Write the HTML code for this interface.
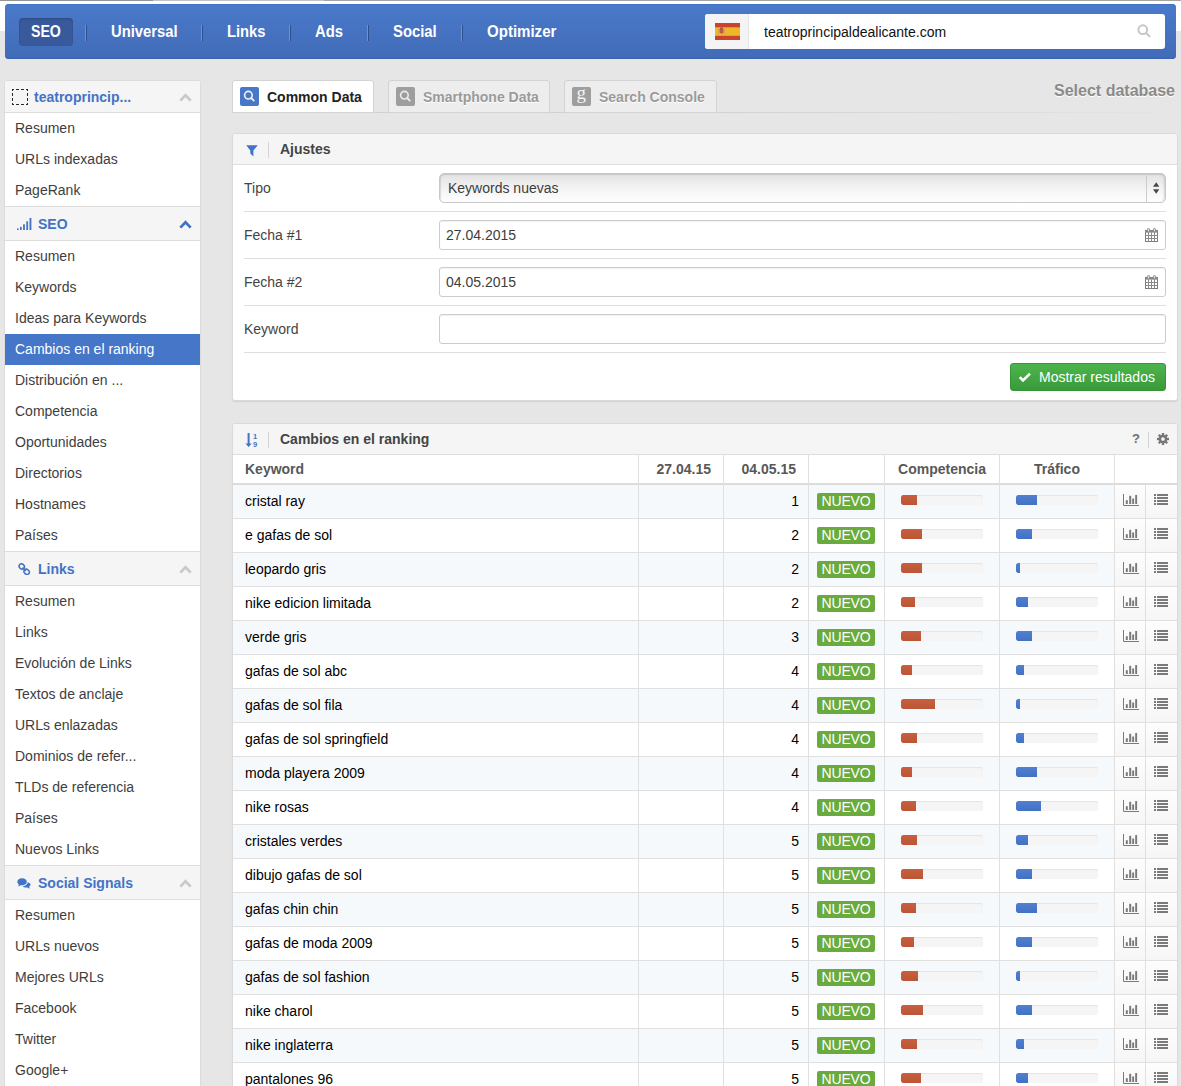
<!DOCTYPE html>
<html lang="es">
<head>
<meta charset="utf-8">
<title>Cambios en el ranking</title>
<style>
*{box-sizing:border-box;margin:0;padding:0}
html,body{width:1181px;height:1086px;overflow:hidden}
body{background:#e6e6e6;font-family:"Liberation Sans",Arial,Helvetica,sans-serif;font-size:14px;color:#333;position:relative}
.abs{position:absolute}
#topwhite{left:0;top:0;width:1181px;height:31px;background:#fff}
#topline{left:0;top:0;width:1181px;height:1px;background:linear-gradient(90deg,#c4c4c4 324px,#a4a4a4 324px)}
#topline2{left:0;top:0;width:153px;height:1px;background:#949494}
#nav{left:5px;top:4px;width:1171px;height:55px;border-radius:4px;background:linear-gradient(#4a7acb,#416bb7);box-shadow:inset 0 -1px 0 #3b64b2,inset 0 1px 0 #4272c6}
#nav .it{position:absolute;top:14px;height:28px;line-height:28px;color:#fff;font-weight:bold;font-size:16px;white-space:nowrap;transform-origin:0 50%}
#nav .act{background:#38599b;border-radius:4px;text-align:center;box-shadow:inset 0 1px 2px rgba(0,0,0,.18)}
#nav .sep{position:absolute;top:21px;width:2px;height:16px;border-left:1px solid #6293ec;border-right:1px solid #2f4e8c}
#search{left:700px;top:10px;width:460px;height:35px;background:#fff;border-radius:3px;overflow:hidden}
#search .flagbox{position:absolute;left:0;top:0;width:44px;height:35px;background:#f4f4f4;border-right:1px solid #e4e4e4}
#search .txt{position:absolute;left:59px;top:1px;line-height:35px;font-size:14px;color:#111}

#side{left:4px;top:80px;width:197px;height:1010px;background:#fff;border:1px solid #dcdcdc;border-radius:3px 3px 0 0;overflow:hidden}
#side .h{height:35px;background:#f5f5f5;border-top:1px solid #ddd;border-bottom:1px solid #ddd;position:relative;font-weight:bold;color:#4373c6;font-size:14px;line-height:35px}
#side .h.first{border-top:none;height:32px;line-height:33px}
#side .h .t{position:absolute;left:33px;top:0}
#side .h svg.ic{position:absolute}
#side .h svg.ch{position:absolute;left:173.5px;top:12.5px}
#side .h.first svg.ch{top:12px}
#side .i{height:31px;line-height:31px;padding-left:10px;color:#3e3e3e;white-space:nowrap}
#side .i.on{background:#4676c8;color:#fff}
#tabline{left:232px;top:112px;width:945px;height:1px;background:linear-gradient(90deg,#d0d0d0 0,#d1d1d1 50%,#dedede 85%,#e5e5e5 100%)}
.tab{top:80px;height:33px;border:1px solid #d3d3d3;border-bottom:1px solid #d3d3d3;border-radius:3px 3px 0 0;background:#ededed;font-weight:bold;color:#9a9a9a;text-shadow:0 1px 0 #fff}
.tab.on{background:#fff;color:#222;text-shadow:none}
.tab .tt{position:absolute;top:0;line-height:32px;white-space:nowrap}
#seldb{left:1001px;top:80.5px;width:174px;text-align:right;font-weight:bold;font-size:16px;color:#8a8a8a;text-shadow:0 1px 0 #fff;line-height:20px}
.panel{background:#fff;border:1px solid #dadada;border-radius:3px;overflow:hidden;box-shadow:0 1px 1px rgba(0,0,0,.09)}
.ph{position:relative;height:31px;box-sizing:border-box;background:#f5f5f5;border-bottom:1px solid #dedede;font-weight:bold;color:#444}
.ph .pt{position:absolute;left:47px;top:1px;line-height:29px}
.psep{position:absolute;left:35px;top:8px;width:1px;height:16px;background:#d4d4d4}
.q{left:899px;top:1px;line-height:28px;font-size:13px;font-weight:bold;color:#6e6e6e}
.fl{position:absolute;left:11px;width:922px;height:47px;border-bottom:1px solid #dedede;color:#444}
.fl span{position:absolute;left:0;top:0;line-height:46px}
.inp{border:1px solid #ccc;border-radius:3px;background:#fff;box-shadow:inset 0 1px 1px rgba(0,0,0,.06)}
.inp span,.sel span{position:absolute;left:6px;top:0;line-height:28px;color:#3d3d3d}
.sel{border:1px solid #c8c8c8;border-radius:5px;background:linear-gradient(#e2e2e2,#f4f4f4 55%,#fefefe);box-shadow:inset 1px 1px 1px rgba(0,0,0,.12),inset -2px 0 2px -1px rgba(0,0,0,.15)}
.sel span{left:8px}
.selarr{position:absolute;right:0;top:0;width:19px;height:28px;border-left:1px solid #ccc}
.selarr svg{position:absolute;left:6px;top:8px}
.btn{border-radius:3px;background:linear-gradient(#4db54d,#399a39);border:1px solid #379537;color:#fff}
.btn span{position:absolute;left:28px;top:0;line-height:26px;white-space:nowrap}
table.t{border-collapse:separate;table-layout:fixed;width:944px}
.t th,.t td{border-right:1px solid #e0e0e0;border-bottom:1px solid #e0e0e0;height:34px;vertical-align:middle;white-space:nowrap;overflow:hidden}
.t th:last-child,.t td:last-child{border-right:none}
.t th{height:30px;border-bottom:2px solid #dcdcdc;font-weight:bold;color:#585858;text-align:left;background:#fff}
.t .k{padding-left:12px}
.t td.k,.t td.n{padding-bottom:2px}
.t td.k{color:#000}
.t th.d{text-align:right;padding-right:12px}
.t th.c{text-align:center}
.t td.n{text-align:right;padding-right:9px;color:#000}
.t tr.o td{background:#f6f9fc}
.t tr.e td{background:#fff}
.t td.g{background:linear-gradient(#fdfdfd,#f6f6f6) !important;text-align:center}
.t td.b{padding-left:8px}
.nv{display:inline-block;width:58px;height:17px;line-height:17px;background:#6aab3e;color:#fff;border-radius:2px;text-align:center;vertical-align:middle;letter-spacing:-0.2px}
.t td.p{padding-left:16px}
.tr{position:relative;top:-1.5px;width:82px;height:10px;border-radius:2px;background:#f5f5f5;box-shadow:inset 0 1px 1px rgba(0,0,0,.07);overflow:hidden}
.fr{height:10px;background:linear-gradient(#c8603f,#bb5536);border-radius:2px 0 0 2px}
.fb{height:10px;background:linear-gradient(#5080d2,#4371c2);border-radius:2px 0 0 2px}
.t td.g svg{display:block;margin:0 auto;position:relative}
.t svg.ci{top:-1.5px;left:0.5px}
.t svg.li{top:-2.5px;left:-1px}
</style>
</head>
<body>
<div class="abs" id="topwhite"></div>
<div class="abs" id="topline"></div>
<div class="abs" id="topline2"></div>

<div class="abs" id="nav">
  <div class="it act" style="left:14px;width:54px"><span style="display:inline-block;transform:scaleX(0.885)">SEO</span></div>
  <div class="sep" style="left:80px"></div>
  <div class="it" style="left:106px;transform:scaleX(0.924)">Universal</div>
  <div class="sep" style="left:196px"></div>
  <div class="it" style="left:222px;transform:scaleX(0.922)">Links</div>
  <div class="sep" style="left:284px"></div>
  <div class="it" style="left:310px;transform:scaleX(0.925)">Ads</div>
  <div class="sep" style="left:362px"></div>
  <div class="it" style="left:388px;transform:scaleX(0.928)">Social</div>
  <div class="sep" style="left:456px"></div>
  <div class="it" style="left:482px;transform:scaleX(0.94)">Optimizer</div>
  <div class="abs" id="search">
    <div class="flagbox">
      <svg class="abs" style="left:10px;top:9px" width="25" height="17" viewBox="0 0 25 17">
        <rect width="25" height="17" fill="#c9432e"/>
        <rect y="4.3" width="25" height="8.5" fill="#eeb72a"/>
        <rect x="3" y="6.2" width="1.3" height="5" fill="#d9a05a"/><rect x="8.7" y="6.2" width="1.3" height="5" fill="#d9a05a"/><path d="M4.6 5.6H8.4V9.6Q6.5 11.8 4.6 9.6Z" fill="#c4573a"/><rect x="5" y="4.6" width="3" height="1.2" fill="#b5452f"/><rect x="5.6" y="7" width="1.8" height="2" fill="#8a6a8a"/>
      </svg>
    </div>
    <div class="txt">teatroprincipaldealicante.com</div>
    <svg class="abs" style="left:431px;top:8.5px" width="16" height="16" viewBox="0 0 16 16" fill="none" stroke="#c6c6c6" stroke-width="2">
      <circle cx="6.8" cy="6.7" r="4.4"/><path d="M10.2 10.1 L13.4 13.2" stroke-linecap="round"/>
    </svg>
  </div>
</div>

<div class="abs" id="side">
  <div class="h first"><svg class="abs" style="left:7px;top:8px" width="16" height="16" viewBox="0 0 16 16" fill="none" stroke="#2a2a2a" stroke-width="1" stroke-dasharray="2 2 3 2 3 2 2 0"><path d="M0 0.5H16"/><path d="M0 15.5H16"/><path d="M0.5 0V16"/><path d="M15.5 0V16"/></svg><span class="t" style="left:29px">teatroprincip...</span><svg class="ch" width="13" height="9" viewBox="0 0 13 9"><path d="M1.3 7.6L6.5 2.2L11.7 7.6" fill="none" stroke="#c9c9c9" stroke-width="2.7"/></svg></div>
  <div class="i">Resumen</div>
  <div class="i">URLs indexadas</div>
  <div class="i">PageRank</div>
  <div class="h"><svg class="ic" style="left:12px;top:11px" width="15" height="12" viewBox="0 0 15 13" preserveAspectRatio="none" fill="#4373c6"><rect x="0" y="11.3" width="1.6" height="1.7"/><rect x="3" y="9.6" width="1.7" height="3.4"/><rect x="6.1" y="6.8" width="1.8" height="6.2"/><rect x="9.3" y="3.6" width="1.8" height="9.4"/><rect x="12.5" y="0" width="1.9" height="13"/></svg><span class="t">SEO</span><svg class="ch" width="13" height="9" viewBox="0 0 13 9"><path d="M1.3 7.6L6.5 2.2L11.7 7.6" fill="none" stroke="#4373c6" stroke-width="2.7"/></svg></div>
  <div class="i">Resumen</div>
  <div class="i">Keywords</div>
  <div class="i">Ideas para Keywords</div>
  <div class="i on">Cambios en el ranking</div>
  <div class="i">Distribución en ...</div>
  <div class="i">Competencia</div>
  <div class="i">Oportunidades</div>
  <div class="i">Directorios</div>
  <div class="i">Hostnames</div>
  <div class="i">Países</div>
  <div class="h"><svg class="ic" style="left:13px;top:10.5px" width="12.5" height="12.5" viewBox="0 0 13 13" fill="none" stroke="#4373c6" stroke-width="1.6"><ellipse cx="3.9" cy="3.6" rx="2.9" ry="2.5" transform="rotate(40 3.9 3.6)"/><ellipse cx="9" cy="9.2" rx="2.9" ry="2.5" transform="rotate(40 9 9.2)"/><path d="M4.8 4.6L8.1 8.2"/></svg><span class="t">Links</span><svg class="ch" width="13" height="9" viewBox="0 0 13 9"><path d="M1.3 7.6L6.5 2.2L11.7 7.6" fill="none" stroke="#c9c9c9" stroke-width="2.7"/></svg></div>
  <div class="i">Resumen</div>
  <div class="i">Links</div>
  <div class="i">Evolución de Links</div>
  <div class="i">Textos de anclaje</div>
  <div class="i">URLs enlazadas</div>
  <div class="i">Dominios de refer...</div>
  <div class="i">TLDs de referencia</div>
  <div class="i">Países</div>
  <div class="i">Nuevos Links</div>
  <div class="h"><svg class="ic" style="left:12px;top:11.5px" width="14" height="11" viewBox="0 0 15 12" fill="#4373c6"><path d="M5.4 0.2C2.5 0.2 0.2 1.9 0.2 4.1C0.2 5.3 0.9 6.3 2 7.1C1.8 7.9 1.3 8.6 0.7 9.1C2 9 3.1 8.5 3.9 7.9C4.4 8 4.9 8 5.4 8C8.3 8 10.6 6.3 10.6 4.1C10.6 1.9 8.3 0.2 5.4 0.2Z"/><path d="M11.6 4.6C11.4 7 8.9 8.9 5.9 9C6.9 9.9 8.3 10.4 9.9 10.4C10.3 10.4 10.7 10.4 11.1 10.3C11.9 10.9 12.9 11.4 14.1 11.5C13.6 11 13.2 10.3 13 9.6C14 8.9 14.6 8 14.6 7C14.6 6 13.5 5.1 11.6 4.6Z"/></svg><span class="t">Social Signals</span><svg class="ch" width="13" height="9" viewBox="0 0 13 9"><path d="M1.3 7.6L6.5 2.2L11.7 7.6" fill="none" stroke="#c9c9c9" stroke-width="2.7"/></svg></div>
  <div class="i">Resumen</div>
  <div class="i">URLs nuevos</div>
  <div class="i">Mejores URLs</div>
  <div class="i">Facebook</div>
  <div class="i">Twitter</div>
  <div class="i">Google+</div>
</div>

<div class="abs" id="tabline"></div>
<div class="abs tab on" style="left:232px;width:142px">
  <svg class="abs" style="left:7px;top:6px" width="19" height="19" viewBox="0 0 19 19"><rect width="19" height="19" rx="2" fill="#4777c9"/><circle cx="8.4" cy="8.2" r="3.8" fill="none" stroke="#f2f2f2" stroke-width="1.6"/><path d="M11.2 11L13.8 13.6" stroke="#f2f2f2" stroke-width="1.8" stroke-linecap="round"/></svg>
  <span class="tt" style="left:34px">Common Data</span>
</div>
<div class="abs tab" style="left:388px;width:162px">
  <svg class="abs" style="left:7px;top:6px" width="19" height="19" viewBox="0 0 19 19"><rect width="19" height="19" rx="2" fill="#9e9e9e"/><circle cx="8.4" cy="8.2" r="3.8" fill="none" stroke="#ececec" stroke-width="1.6"/><path d="M11.2 11L13.8 13.6" stroke="#ececec" stroke-width="1.8" stroke-linecap="round"/></svg>
  <span class="tt" style="left:34px">Smartphone Data</span>
</div>
<div class="abs tab" style="left:564px;width:153px">
  <svg class="abs" style="left:7px;top:6px" width="19" height="19" viewBox="0 0 19 19"><rect width="19" height="19" rx="2" fill="#9e9e9e"/><text x="9.3" y="11.7" text-anchor="middle" font-family="Liberation Serif, serif" font-size="19" font-weight="normal" style="text-shadow:none" fill="#f4f4f4">g</text></svg>
  <span class="tt" style="left:34px">Search Console</span>
</div>
<div class="abs" id="seldb">Select database</div>

<div class="abs panel" id="p1" style="left:232px;top:133px;width:946px;height:268px">
  <div class="ph">
    <svg class="abs" style="left:13px;top:11px" width="12" height="12" viewBox="0 0 12 12"><path d="M0.2 0.2H11.8L7.4 5.4V11.6L4.3 8.6V5.4Z" fill="#4373c6"/></svg>
    <div class="psep"></div>
    <span class="pt">Ajustes</span>
  </div>
  <div class="fl" style="top:31px"><span>Tipo</span></div>
  <div class="fl" style="top:78px"><span>Fecha #1</span></div>
  <div class="fl" style="top:125px"><span>Fecha #2</span></div>
  <div class="fl" style="top:172px"><span>Keyword</span></div>
  <div class="abs sel" style="left:206px;top:39px;width:727px;height:30px"><span>Keywords nuevas</span>
    <div class="selarr"><svg width="6.4" height="12" viewBox="0 0 7 12" preserveAspectRatio="none" fill="#484848"><path d="M3.5 0.2L7 4.8H0Z"/><path d="M3.5 11.8L7 7.2H0Z"/></svg></div>
  </div>
  <div class="abs inp" style="left:206px;top:86px;width:727px;height:30px"><span>27.04.2015</span><svg class="abs cal" style="right:7px;top:7px" width="13" height="14" viewBox="0 0 13 14"><rect x="0.5" y="2.5" width="12" height="11" fill="#fff" stroke="#7c7c7c"/><rect x="0" y="2" width="13" height="2.6" fill="#858585"/><path d="M0.5 7.5H12.5M0.5 10.5H12.5M3.5 4.5V13.5M6.5 4.5V13.5M9.5 4.5V13.5" stroke="#8a8a8a" stroke-width="1" fill="none"/><rect x="2.4" y="0.4" width="2.2" height="3.6" rx="1.1" fill="#ddd" stroke="#7c7c7c" stroke-width="0.8"/><rect x="8.4" y="0.4" width="2.2" height="3.6" rx="1.1" fill="#ddd" stroke="#7c7c7c" stroke-width="0.8"/></svg></div>
  <div class="abs inp" style="left:206px;top:133px;width:727px;height:30px"><span>04.05.2015</span><svg class="abs cal" style="right:7px;top:7px" width="13" height="14" viewBox="0 0 13 14"><rect x="0.5" y="2.5" width="12" height="11" fill="#fff" stroke="#7c7c7c"/><rect x="0" y="2" width="13" height="2.6" fill="#858585"/><path d="M0.5 7.5H12.5M0.5 10.5H12.5M3.5 4.5V13.5M6.5 4.5V13.5M9.5 4.5V13.5" stroke="#8a8a8a" stroke-width="1" fill="none"/><rect x="2.4" y="0.4" width="2.2" height="3.6" rx="1.1" fill="#ddd" stroke="#7c7c7c" stroke-width="0.8"/><rect x="8.4" y="0.4" width="2.2" height="3.6" rx="1.1" fill="#ddd" stroke="#7c7c7c" stroke-width="0.8"/></svg></div>
  <div class="abs inp" style="left:206px;top:180px;width:727px;height:30px"></div>
  <div class="abs btn" style="left:777px;top:229px;width:156px;height:28px">
    <svg class="abs" style="left:6.7px;top:7px" width="14" height="12" viewBox="0 0 14 12"><path d="M1.7 6.2L5 9.5L12 2.6" fill="none" stroke="#fff" stroke-width="2.6"/></svg>
    <span>Mostrar resultados</span>
  </div>
</div>

<div class="abs panel" id="p2" style="left:232px;top:423px;width:946px;height:700px">
  <div class="ph">
    <svg class="abs" style="left:12px;top:8px" width="14" height="16" viewBox="0 0 14 16"><path d="M3.6 1V12.5" stroke="#4373c6" stroke-width="2" fill="none"/><path d="M0.5 11.4H6.7L3.6 15Z" fill="#4373c6"/><text x="8" y="7" font-size="7.5" font-family="Liberation Sans, sans-serif" fill="#4373c6">1</text><text x="8" y="15" font-size="7.5" font-family="Liberation Sans, sans-serif" fill="#4373c6">9</text></svg>
    <div class="psep"></div>
    <span class="pt">Cambios en el ranking</span>
    <span class="abs q">?</span>
    <div class="psep" style="left:915px"></div>
    <svg class="abs" style="left:924px;top:9px" width="12" height="12" viewBox="0 0 13 13"><g fill="#777"><circle cx="6.5" cy="6.5" r="4.6"/><g id="teeth"><rect x="5.2" y="0" width="2.6" height="13"/><rect x="0" y="5.2" width="13" height="2.6"/><rect x="5.2" y="0" width="2.6" height="13" transform="rotate(45 6.5 6.5)"/><rect x="5.2" y="0" width="2.6" height="13" transform="rotate(-45 6.5 6.5)"/></g></g><circle cx="6.5" cy="6.5" r="2" fill="#f5f5f5"/></svg>
  </div>
  <table class="t" cellspacing="0" cellpadding="0">
    <colgroup><col style="width:406px"><col style="width:85px"><col style="width:85px"><col style="width:76px"><col style="width:115px"><col style="width:115px"><col style="width:31px"><col style="width:31px"></colgroup>
    <tr class="hd"><th class="k">Keyword</th><th class="d">27.04.15</th><th class="d">04.05.15</th><th></th><th class="c">Competencia</th><th class="c">Tráfico</th><th colspan="2"></th></tr>
<tr class="o"><td class="k">cristal ray</td><td></td><td class="n">1</td><td class="b"><span class="nv">NUEVO</span></td><td class="p"><div class="tr"><div class="fr" style="width:16px"></div></div></td><td class="p"><div class="tr"><div class="fb" style="width:21px"></div></div></td><td class="g"><svg class="ci" width="16" height="12" viewBox="0 0 16 12"><path d="M0.5 0V11.5H16" fill="none" stroke="#7a7a7a" stroke-width="1"/><rect x="2.8" y="6.2" width="2" height="3.8" fill="#7a7a7a"/><rect x="6.2" y="1.8" width="2" height="8.2" fill="#7a7a7a"/><rect x="9.2" y="4.5" width="1.9" height="5.5" fill="#7a7a7a"/><rect x="12.2" y="1" width="1.9" height="9" fill="#7a7a7a"/></svg></td><td class="g"><svg class="li" width="14" height="11" viewBox="0 0 14 11" fill="#7a7a7a"><rect x="0" y="0" width="2" height="2"/><rect x="3" y="0" width="11" height="2"/><rect x="0" y="3" width="2" height="2"/><rect x="3" y="3" width="11" height="2"/><rect x="0" y="6" width="2" height="2"/><rect x="3" y="6" width="11" height="2"/><rect x="0" y="9" width="2" height="2"/><rect x="3" y="9" width="11" height="2"/></svg></td></tr>
<tr class="e"><td class="k">e gafas de sol</td><td></td><td class="n">2</td><td class="b"><span class="nv">NUEVO</span></td><td class="p"><div class="tr"><div class="fr" style="width:21px"></div></div></td><td class="p"><div class="tr"><div class="fb" style="width:16px"></div></div></td><td class="g"><svg class="ci" width="16" height="12" viewBox="0 0 16 12"><path d="M0.5 0V11.5H16" fill="none" stroke="#7a7a7a" stroke-width="1"/><rect x="2.8" y="6.2" width="2" height="3.8" fill="#7a7a7a"/><rect x="6.2" y="1.8" width="2" height="8.2" fill="#7a7a7a"/><rect x="9.2" y="4.5" width="1.9" height="5.5" fill="#7a7a7a"/><rect x="12.2" y="1" width="1.9" height="9" fill="#7a7a7a"/></svg></td><td class="g"><svg class="li" width="14" height="11" viewBox="0 0 14 11" fill="#7a7a7a"><rect x="0" y="0" width="2" height="2"/><rect x="3" y="0" width="11" height="2"/><rect x="0" y="3" width="2" height="2"/><rect x="3" y="3" width="11" height="2"/><rect x="0" y="6" width="2" height="2"/><rect x="3" y="6" width="11" height="2"/><rect x="0" y="9" width="2" height="2"/><rect x="3" y="9" width="11" height="2"/></svg></td></tr>
<tr class="o"><td class="k">leopardo gris</td><td></td><td class="n">2</td><td class="b"><span class="nv">NUEVO</span></td><td class="p"><div class="tr"><div class="fr" style="width:21px"></div></div></td><td class="p"><div class="tr"><div class="fb" style="width:4px"></div></div></td><td class="g"><svg class="ci" width="16" height="12" viewBox="0 0 16 12"><path d="M0.5 0V11.5H16" fill="none" stroke="#7a7a7a" stroke-width="1"/><rect x="2.8" y="6.2" width="2" height="3.8" fill="#7a7a7a"/><rect x="6.2" y="1.8" width="2" height="8.2" fill="#7a7a7a"/><rect x="9.2" y="4.5" width="1.9" height="5.5" fill="#7a7a7a"/><rect x="12.2" y="1" width="1.9" height="9" fill="#7a7a7a"/></svg></td><td class="g"><svg class="li" width="14" height="11" viewBox="0 0 14 11" fill="#7a7a7a"><rect x="0" y="0" width="2" height="2"/><rect x="3" y="0" width="11" height="2"/><rect x="0" y="3" width="2" height="2"/><rect x="3" y="3" width="11" height="2"/><rect x="0" y="6" width="2" height="2"/><rect x="3" y="6" width="11" height="2"/><rect x="0" y="9" width="2" height="2"/><rect x="3" y="9" width="11" height="2"/></svg></td></tr>
<tr class="e"><td class="k">nike edicion limitada</td><td></td><td class="n">2</td><td class="b"><span class="nv">NUEVO</span></td><td class="p"><div class="tr"><div class="fr" style="width:14px"></div></div></td><td class="p"><div class="tr"><div class="fb" style="width:12px"></div></div></td><td class="g"><svg class="ci" width="16" height="12" viewBox="0 0 16 12"><path d="M0.5 0V11.5H16" fill="none" stroke="#7a7a7a" stroke-width="1"/><rect x="2.8" y="6.2" width="2" height="3.8" fill="#7a7a7a"/><rect x="6.2" y="1.8" width="2" height="8.2" fill="#7a7a7a"/><rect x="9.2" y="4.5" width="1.9" height="5.5" fill="#7a7a7a"/><rect x="12.2" y="1" width="1.9" height="9" fill="#7a7a7a"/></svg></td><td class="g"><svg class="li" width="14" height="11" viewBox="0 0 14 11" fill="#7a7a7a"><rect x="0" y="0" width="2" height="2"/><rect x="3" y="0" width="11" height="2"/><rect x="0" y="3" width="2" height="2"/><rect x="3" y="3" width="11" height="2"/><rect x="0" y="6" width="2" height="2"/><rect x="3" y="6" width="11" height="2"/><rect x="0" y="9" width="2" height="2"/><rect x="3" y="9" width="11" height="2"/></svg></td></tr>
<tr class="o"><td class="k">verde gris</td><td></td><td class="n">3</td><td class="b"><span class="nv">NUEVO</span></td><td class="p"><div class="tr"><div class="fr" style="width:20px"></div></div></td><td class="p"><div class="tr"><div class="fb" style="width:16px"></div></div></td><td class="g"><svg class="ci" width="16" height="12" viewBox="0 0 16 12"><path d="M0.5 0V11.5H16" fill="none" stroke="#7a7a7a" stroke-width="1"/><rect x="2.8" y="6.2" width="2" height="3.8" fill="#7a7a7a"/><rect x="6.2" y="1.8" width="2" height="8.2" fill="#7a7a7a"/><rect x="9.2" y="4.5" width="1.9" height="5.5" fill="#7a7a7a"/><rect x="12.2" y="1" width="1.9" height="9" fill="#7a7a7a"/></svg></td><td class="g"><svg class="li" width="14" height="11" viewBox="0 0 14 11" fill="#7a7a7a"><rect x="0" y="0" width="2" height="2"/><rect x="3" y="0" width="11" height="2"/><rect x="0" y="3" width="2" height="2"/><rect x="3" y="3" width="11" height="2"/><rect x="0" y="6" width="2" height="2"/><rect x="3" y="6" width="11" height="2"/><rect x="0" y="9" width="2" height="2"/><rect x="3" y="9" width="11" height="2"/></svg></td></tr>
<tr class="e"><td class="k">gafas de sol abc</td><td></td><td class="n">4</td><td class="b"><span class="nv">NUEVO</span></td><td class="p"><div class="tr"><div class="fr" style="width:11px"></div></div></td><td class="p"><div class="tr"><div class="fb" style="width:8px"></div></div></td><td class="g"><svg class="ci" width="16" height="12" viewBox="0 0 16 12"><path d="M0.5 0V11.5H16" fill="none" stroke="#7a7a7a" stroke-width="1"/><rect x="2.8" y="6.2" width="2" height="3.8" fill="#7a7a7a"/><rect x="6.2" y="1.8" width="2" height="8.2" fill="#7a7a7a"/><rect x="9.2" y="4.5" width="1.9" height="5.5" fill="#7a7a7a"/><rect x="12.2" y="1" width="1.9" height="9" fill="#7a7a7a"/></svg></td><td class="g"><svg class="li" width="14" height="11" viewBox="0 0 14 11" fill="#7a7a7a"><rect x="0" y="0" width="2" height="2"/><rect x="3" y="0" width="11" height="2"/><rect x="0" y="3" width="2" height="2"/><rect x="3" y="3" width="11" height="2"/><rect x="0" y="6" width="2" height="2"/><rect x="3" y="6" width="11" height="2"/><rect x="0" y="9" width="2" height="2"/><rect x="3" y="9" width="11" height="2"/></svg></td></tr>
<tr class="o"><td class="k">gafas de sol fila</td><td></td><td class="n">4</td><td class="b"><span class="nv">NUEVO</span></td><td class="p"><div class="tr"><div class="fr" style="width:34px"></div></div></td><td class="p"><div class="tr"><div class="fb" style="width:4px"></div></div></td><td class="g"><svg class="ci" width="16" height="12" viewBox="0 0 16 12"><path d="M0.5 0V11.5H16" fill="none" stroke="#7a7a7a" stroke-width="1"/><rect x="2.8" y="6.2" width="2" height="3.8" fill="#7a7a7a"/><rect x="6.2" y="1.8" width="2" height="8.2" fill="#7a7a7a"/><rect x="9.2" y="4.5" width="1.9" height="5.5" fill="#7a7a7a"/><rect x="12.2" y="1" width="1.9" height="9" fill="#7a7a7a"/></svg></td><td class="g"><svg class="li" width="14" height="11" viewBox="0 0 14 11" fill="#7a7a7a"><rect x="0" y="0" width="2" height="2"/><rect x="3" y="0" width="11" height="2"/><rect x="0" y="3" width="2" height="2"/><rect x="3" y="3" width="11" height="2"/><rect x="0" y="6" width="2" height="2"/><rect x="3" y="6" width="11" height="2"/><rect x="0" y="9" width="2" height="2"/><rect x="3" y="9" width="11" height="2"/></svg></td></tr>
<tr class="e"><td class="k">gafas de sol springfield</td><td></td><td class="n">4</td><td class="b"><span class="nv">NUEVO</span></td><td class="p"><div class="tr"><div class="fr" style="width:16px"></div></div></td><td class="p"><div class="tr"><div class="fb" style="width:8px"></div></div></td><td class="g"><svg class="ci" width="16" height="12" viewBox="0 0 16 12"><path d="M0.5 0V11.5H16" fill="none" stroke="#7a7a7a" stroke-width="1"/><rect x="2.8" y="6.2" width="2" height="3.8" fill="#7a7a7a"/><rect x="6.2" y="1.8" width="2" height="8.2" fill="#7a7a7a"/><rect x="9.2" y="4.5" width="1.9" height="5.5" fill="#7a7a7a"/><rect x="12.2" y="1" width="1.9" height="9" fill="#7a7a7a"/></svg></td><td class="g"><svg class="li" width="14" height="11" viewBox="0 0 14 11" fill="#7a7a7a"><rect x="0" y="0" width="2" height="2"/><rect x="3" y="0" width="11" height="2"/><rect x="0" y="3" width="2" height="2"/><rect x="3" y="3" width="11" height="2"/><rect x="0" y="6" width="2" height="2"/><rect x="3" y="6" width="11" height="2"/><rect x="0" y="9" width="2" height="2"/><rect x="3" y="9" width="11" height="2"/></svg></td></tr>
<tr class="o"><td class="k">moda playera 2009</td><td></td><td class="n">4</td><td class="b"><span class="nv">NUEVO</span></td><td class="p"><div class="tr"><div class="fr" style="width:11px"></div></div></td><td class="p"><div class="tr"><div class="fb" style="width:21px"></div></div></td><td class="g"><svg class="ci" width="16" height="12" viewBox="0 0 16 12"><path d="M0.5 0V11.5H16" fill="none" stroke="#7a7a7a" stroke-width="1"/><rect x="2.8" y="6.2" width="2" height="3.8" fill="#7a7a7a"/><rect x="6.2" y="1.8" width="2" height="8.2" fill="#7a7a7a"/><rect x="9.2" y="4.5" width="1.9" height="5.5" fill="#7a7a7a"/><rect x="12.2" y="1" width="1.9" height="9" fill="#7a7a7a"/></svg></td><td class="g"><svg class="li" width="14" height="11" viewBox="0 0 14 11" fill="#7a7a7a"><rect x="0" y="0" width="2" height="2"/><rect x="3" y="0" width="11" height="2"/><rect x="0" y="3" width="2" height="2"/><rect x="3" y="3" width="11" height="2"/><rect x="0" y="6" width="2" height="2"/><rect x="3" y="6" width="11" height="2"/><rect x="0" y="9" width="2" height="2"/><rect x="3" y="9" width="11" height="2"/></svg></td></tr>
<tr class="e"><td class="k">nike rosas</td><td></td><td class="n">4</td><td class="b"><span class="nv">NUEVO</span></td><td class="p"><div class="tr"><div class="fr" style="width:15px"></div></div></td><td class="p"><div class="tr"><div class="fb" style="width:25px"></div></div></td><td class="g"><svg class="ci" width="16" height="12" viewBox="0 0 16 12"><path d="M0.5 0V11.5H16" fill="none" stroke="#7a7a7a" stroke-width="1"/><rect x="2.8" y="6.2" width="2" height="3.8" fill="#7a7a7a"/><rect x="6.2" y="1.8" width="2" height="8.2" fill="#7a7a7a"/><rect x="9.2" y="4.5" width="1.9" height="5.5" fill="#7a7a7a"/><rect x="12.2" y="1" width="1.9" height="9" fill="#7a7a7a"/></svg></td><td class="g"><svg class="li" width="14" height="11" viewBox="0 0 14 11" fill="#7a7a7a"><rect x="0" y="0" width="2" height="2"/><rect x="3" y="0" width="11" height="2"/><rect x="0" y="3" width="2" height="2"/><rect x="3" y="3" width="11" height="2"/><rect x="0" y="6" width="2" height="2"/><rect x="3" y="6" width="11" height="2"/><rect x="0" y="9" width="2" height="2"/><rect x="3" y="9" width="11" height="2"/></svg></td></tr>
<tr class="o"><td class="k">cristales verdes</td><td></td><td class="n">5</td><td class="b"><span class="nv">NUEVO</span></td><td class="p"><div class="tr"><div class="fr" style="width:16px"></div></div></td><td class="p"><div class="tr"><div class="fb" style="width:12px"></div></div></td><td class="g"><svg class="ci" width="16" height="12" viewBox="0 0 16 12"><path d="M0.5 0V11.5H16" fill="none" stroke="#7a7a7a" stroke-width="1"/><rect x="2.8" y="6.2" width="2" height="3.8" fill="#7a7a7a"/><rect x="6.2" y="1.8" width="2" height="8.2" fill="#7a7a7a"/><rect x="9.2" y="4.5" width="1.9" height="5.5" fill="#7a7a7a"/><rect x="12.2" y="1" width="1.9" height="9" fill="#7a7a7a"/></svg></td><td class="g"><svg class="li" width="14" height="11" viewBox="0 0 14 11" fill="#7a7a7a"><rect x="0" y="0" width="2" height="2"/><rect x="3" y="0" width="11" height="2"/><rect x="0" y="3" width="2" height="2"/><rect x="3" y="3" width="11" height="2"/><rect x="0" y="6" width="2" height="2"/><rect x="3" y="6" width="11" height="2"/><rect x="0" y="9" width="2" height="2"/><rect x="3" y="9" width="11" height="2"/></svg></td></tr>
<tr class="e"><td class="k">dibujo gafas de sol</td><td></td><td class="n">5</td><td class="b"><span class="nv">NUEVO</span></td><td class="p"><div class="tr"><div class="fr" style="width:22px"></div></div></td><td class="p"><div class="tr"><div class="fb" style="width:16px"></div></div></td><td class="g"><svg class="ci" width="16" height="12" viewBox="0 0 16 12"><path d="M0.5 0V11.5H16" fill="none" stroke="#7a7a7a" stroke-width="1"/><rect x="2.8" y="6.2" width="2" height="3.8" fill="#7a7a7a"/><rect x="6.2" y="1.8" width="2" height="8.2" fill="#7a7a7a"/><rect x="9.2" y="4.5" width="1.9" height="5.5" fill="#7a7a7a"/><rect x="12.2" y="1" width="1.9" height="9" fill="#7a7a7a"/></svg></td><td class="g"><svg class="li" width="14" height="11" viewBox="0 0 14 11" fill="#7a7a7a"><rect x="0" y="0" width="2" height="2"/><rect x="3" y="0" width="11" height="2"/><rect x="0" y="3" width="2" height="2"/><rect x="3" y="3" width="11" height="2"/><rect x="0" y="6" width="2" height="2"/><rect x="3" y="6" width="11" height="2"/><rect x="0" y="9" width="2" height="2"/><rect x="3" y="9" width="11" height="2"/></svg></td></tr>
<tr class="o"><td class="k">gafas chin chin</td><td></td><td class="n">5</td><td class="b"><span class="nv">NUEVO</span></td><td class="p"><div class="tr"><div class="fr" style="width:15px"></div></div></td><td class="p"><div class="tr"><div class="fb" style="width:21px"></div></div></td><td class="g"><svg class="ci" width="16" height="12" viewBox="0 0 16 12"><path d="M0.5 0V11.5H16" fill="none" stroke="#7a7a7a" stroke-width="1"/><rect x="2.8" y="6.2" width="2" height="3.8" fill="#7a7a7a"/><rect x="6.2" y="1.8" width="2" height="8.2" fill="#7a7a7a"/><rect x="9.2" y="4.5" width="1.9" height="5.5" fill="#7a7a7a"/><rect x="12.2" y="1" width="1.9" height="9" fill="#7a7a7a"/></svg></td><td class="g"><svg class="li" width="14" height="11" viewBox="0 0 14 11" fill="#7a7a7a"><rect x="0" y="0" width="2" height="2"/><rect x="3" y="0" width="11" height="2"/><rect x="0" y="3" width="2" height="2"/><rect x="3" y="3" width="11" height="2"/><rect x="0" y="6" width="2" height="2"/><rect x="3" y="6" width="11" height="2"/><rect x="0" y="9" width="2" height="2"/><rect x="3" y="9" width="11" height="2"/></svg></td></tr>
<tr class="e"><td class="k">gafas de moda 2009</td><td></td><td class="n">5</td><td class="b"><span class="nv">NUEVO</span></td><td class="p"><div class="tr"><div class="fr" style="width:13px"></div></div></td><td class="p"><div class="tr"><div class="fb" style="width:16px"></div></div></td><td class="g"><svg class="ci" width="16" height="12" viewBox="0 0 16 12"><path d="M0.5 0V11.5H16" fill="none" stroke="#7a7a7a" stroke-width="1"/><rect x="2.8" y="6.2" width="2" height="3.8" fill="#7a7a7a"/><rect x="6.2" y="1.8" width="2" height="8.2" fill="#7a7a7a"/><rect x="9.2" y="4.5" width="1.9" height="5.5" fill="#7a7a7a"/><rect x="12.2" y="1" width="1.9" height="9" fill="#7a7a7a"/></svg></td><td class="g"><svg class="li" width="14" height="11" viewBox="0 0 14 11" fill="#7a7a7a"><rect x="0" y="0" width="2" height="2"/><rect x="3" y="0" width="11" height="2"/><rect x="0" y="3" width="2" height="2"/><rect x="3" y="3" width="11" height="2"/><rect x="0" y="6" width="2" height="2"/><rect x="3" y="6" width="11" height="2"/><rect x="0" y="9" width="2" height="2"/><rect x="3" y="9" width="11" height="2"/></svg></td></tr>
<tr class="o"><td class="k">gafas de sol fashion</td><td></td><td class="n">5</td><td class="b"><span class="nv">NUEVO</span></td><td class="p"><div class="tr"><div class="fr" style="width:17px"></div></div></td><td class="p"><div class="tr"><div class="fb" style="width:4px"></div></div></td><td class="g"><svg class="ci" width="16" height="12" viewBox="0 0 16 12"><path d="M0.5 0V11.5H16" fill="none" stroke="#7a7a7a" stroke-width="1"/><rect x="2.8" y="6.2" width="2" height="3.8" fill="#7a7a7a"/><rect x="6.2" y="1.8" width="2" height="8.2" fill="#7a7a7a"/><rect x="9.2" y="4.5" width="1.9" height="5.5" fill="#7a7a7a"/><rect x="12.2" y="1" width="1.9" height="9" fill="#7a7a7a"/></svg></td><td class="g"><svg class="li" width="14" height="11" viewBox="0 0 14 11" fill="#7a7a7a"><rect x="0" y="0" width="2" height="2"/><rect x="3" y="0" width="11" height="2"/><rect x="0" y="3" width="2" height="2"/><rect x="3" y="3" width="11" height="2"/><rect x="0" y="6" width="2" height="2"/><rect x="3" y="6" width="11" height="2"/><rect x="0" y="9" width="2" height="2"/><rect x="3" y="9" width="11" height="2"/></svg></td></tr>
<tr class="e"><td class="k">nike charol</td><td></td><td class="n">5</td><td class="b"><span class="nv">NUEVO</span></td><td class="p"><div class="tr"><div class="fr" style="width:22px"></div></div></td><td class="p"><div class="tr"><div class="fb" style="width:16px"></div></div></td><td class="g"><svg class="ci" width="16" height="12" viewBox="0 0 16 12"><path d="M0.5 0V11.5H16" fill="none" stroke="#7a7a7a" stroke-width="1"/><rect x="2.8" y="6.2" width="2" height="3.8" fill="#7a7a7a"/><rect x="6.2" y="1.8" width="2" height="8.2" fill="#7a7a7a"/><rect x="9.2" y="4.5" width="1.9" height="5.5" fill="#7a7a7a"/><rect x="12.2" y="1" width="1.9" height="9" fill="#7a7a7a"/></svg></td><td class="g"><svg class="li" width="14" height="11" viewBox="0 0 14 11" fill="#7a7a7a"><rect x="0" y="0" width="2" height="2"/><rect x="3" y="0" width="11" height="2"/><rect x="0" y="3" width="2" height="2"/><rect x="3" y="3" width="11" height="2"/><rect x="0" y="6" width="2" height="2"/><rect x="3" y="6" width="11" height="2"/><rect x="0" y="9" width="2" height="2"/><rect x="3" y="9" width="11" height="2"/></svg></td></tr>
<tr class="o"><td class="k">nike inglaterra</td><td></td><td class="n">5</td><td class="b"><span class="nv">NUEVO</span></td><td class="p"><div class="tr"><div class="fr" style="width:16px"></div></div></td><td class="p"><div class="tr"><div class="fb" style="width:8px"></div></div></td><td class="g"><svg class="ci" width="16" height="12" viewBox="0 0 16 12"><path d="M0.5 0V11.5H16" fill="none" stroke="#7a7a7a" stroke-width="1"/><rect x="2.8" y="6.2" width="2" height="3.8" fill="#7a7a7a"/><rect x="6.2" y="1.8" width="2" height="8.2" fill="#7a7a7a"/><rect x="9.2" y="4.5" width="1.9" height="5.5" fill="#7a7a7a"/><rect x="12.2" y="1" width="1.9" height="9" fill="#7a7a7a"/></svg></td><td class="g"><svg class="li" width="14" height="11" viewBox="0 0 14 11" fill="#7a7a7a"><rect x="0" y="0" width="2" height="2"/><rect x="3" y="0" width="11" height="2"/><rect x="0" y="3" width="2" height="2"/><rect x="3" y="3" width="11" height="2"/><rect x="0" y="6" width="2" height="2"/><rect x="3" y="6" width="11" height="2"/><rect x="0" y="9" width="2" height="2"/><rect x="3" y="9" width="11" height="2"/></svg></td></tr>
<tr class="e"><td class="k">pantalones 96</td><td></td><td class="n">5</td><td class="b"><span class="nv">NUEVO</span></td><td class="p"><div class="tr"><div class="fr" style="width:20px"></div></div></td><td class="p"><div class="tr"><div class="fb" style="width:12px"></div></div></td><td class="g"><svg class="ci" width="16" height="12" viewBox="0 0 16 12"><path d="M0.5 0V11.5H16" fill="none" stroke="#7a7a7a" stroke-width="1"/><rect x="2.8" y="6.2" width="2" height="3.8" fill="#7a7a7a"/><rect x="6.2" y="1.8" width="2" height="8.2" fill="#7a7a7a"/><rect x="9.2" y="4.5" width="1.9" height="5.5" fill="#7a7a7a"/><rect x="12.2" y="1" width="1.9" height="9" fill="#7a7a7a"/></svg></td><td class="g"><svg class="li" width="14" height="11" viewBox="0 0 14 11" fill="#7a7a7a"><rect x="0" y="0" width="2" height="2"/><rect x="3" y="0" width="11" height="2"/><rect x="0" y="3" width="2" height="2"/><rect x="3" y="3" width="11" height="2"/><rect x="0" y="6" width="2" height="2"/><rect x="3" y="6" width="11" height="2"/><rect x="0" y="9" width="2" height="2"/><rect x="3" y="9" width="11" height="2"/></svg></td></tr>
  </table>
</div>

</body>
</html>
